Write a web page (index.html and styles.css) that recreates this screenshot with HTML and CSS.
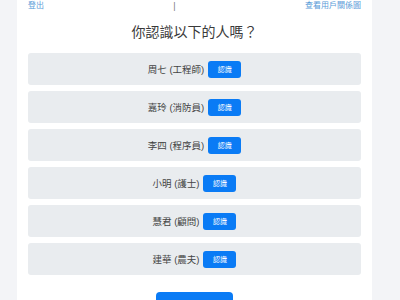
FILE: index.html
```html
<!DOCTYPE html>
<html lang="zh-Hant">
<head>
<meta charset="utf-8">
<title>你認識以下的人嗎？</title>
<link rel="stylesheet" href="styles.css">
</head>
<body>
<div class="card">
  <div class="topbar">
    <a class="link" href="#">登出</a>
    <span class="sep">|</span>
    <a class="link" href="#">查看用戶關係圖</a>
  </div>
  <h1 class="title">你認識以下的人嗎？</h1>
  <div class="list">
    <div class="row"><span class="name">周七 (工程師)</span><button class="know">認識</button></div>
    <div class="row"><span class="name">嘉玲 (消防員)</span><button class="know">認識</button></div>
    <div class="row"><span class="name">李四 (程序員)</span><button class="know">認識</button></div>
    <div class="row"><span class="name">小明 (護士)</span><button class="know">認識</button></div>
    <div class="row"><span class="name">慧君 (顧問)</span><button class="know">認識</button></div>
    <div class="row"><span class="name">建華 (農夫)</span><button class="know">認識</button></div>
  </div>
  <div class="footer">
    <button class="submit">提交</button>
  </div>
</div>
</body>
</html>
```
FILE: styles.css
```css
html, body {
  margin: 0;
  padding: 0;
}
body {
  background: #f3f4f7;
  font-family: "Liberation Sans", "Noto Sans CJK TC", sans-serif;
  color: #444;
  overflow: hidden;
}
.card {
  margin-left: 17px;
  width: 355px;
  box-sizing: border-box;
  background: #fff;
  padding: 0 11px 20px;
  min-height: 300px;
}
.topbar {
  display: flex;
  justify-content: space-between;
  align-items: center;
  font-size: 8px;
  line-height: 12px;
  height: 12px;
}
.link {
  color: #5a9bd8;
  text-decoration: none;
}
.sep {
  color: #777;
  font-size: 9px;
}
.title {
  margin: 10px 0 11px;
  font-size: 14px;
  line-height: 20px;
  font-weight: normal;
  text-align: center;
  color: #3a3a3a;
}
.list {
  display: flex;
  flex-direction: column;
  gap: 6px;
}
.row {
  height: 32px;
  background: #e9ecef;
  border-radius: 3px;
  display: flex;
  justify-content: center;
  align-items: center;
  gap: 4px;
}
.name {
  font-size: 9.5px;
  color: #444;
}
.know {
  width: 33px;
  height: 17px;
  padding: 0;
  border: none;
  border-radius: 3px;
  background: #0a7bf5;
  color: #fff;
  font-family: inherit;
  font-size: 7px;
}
.footer {
  display: flex;
  justify-content: center;
  margin-top: 17px;
}
.submit {
  width: 77px;
  height: 32px;
  border: none;
  border-radius: 4px;
  background: #0a7bf5;
  color: #fff;
  font-family: inherit;
  font-size: 10px;
}
```
